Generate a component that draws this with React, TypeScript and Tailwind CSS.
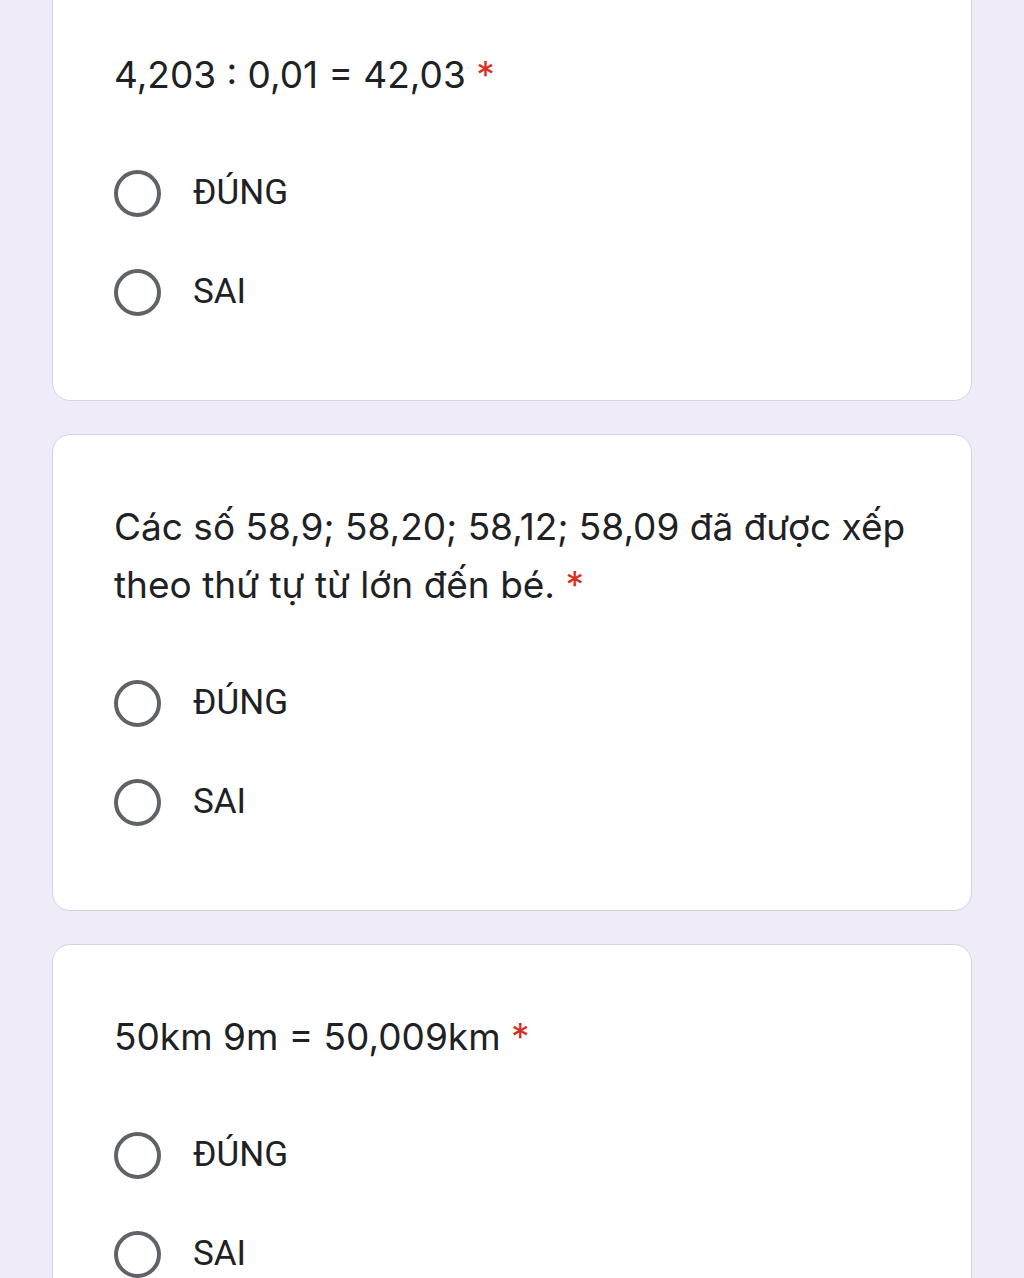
import React from "react";

function Radio({ label }: { label: string }) {
  return (
    <div className="flex h-[99px] items-center">
      <div className="h-[47px] w-[47px] shrink-0 rounded-full border-[4px] border-[#5f6368]" />
      <span
        className="ml-[32px] text-[35px] text-[#202124]"
        style={{ fontFamily: "Roboto, 'Liberation Sans', sans-serif" }}
      >
        {label}
      </span>
    </div>
  );
}

function Card({ children, first }: { children: React.ReactNode; first?: boolean }) {
  return (
    <div
      className={
        "rounded-[18px] border border-[#d6d4dc] bg-white pl-[61px] pr-[46px] pt-[63px] pb-[58px]" +
        (first ? " -mt-[18px]" : "")
      }
    >
      {children}
    </div>
  );
}

function Question({ children }: { children: React.ReactNode }) {
  return (
    <div
      className="text-[37px] leading-[58px] text-[#202124]"
      style={{ fontFamily: "Inter, 'Noto Sans', sans-serif" }}
    >
      {children} <span className="text-[#d93025]">*</span>
    </div>
  );
}

export default function App() {
  return (
    <div className="min-h-[1278px] overflow-hidden bg-[#f0ebf8] px-[52px]">
      <div className="flex flex-col gap-[33px]">
        <Card first>
          <Question>4,203 : 0,01 = 42,03</Question>
          <div className="mt-[40px]">
            <Radio label="ĐÚNG" />
            <Radio label="SAI" />
          </div>
        </Card>
        <Card>
          <Question>
            Các số 58,9; 58,20; 58,12; 58,09 đã được xếp theo thứ tự từ lớn đến bé.
          </Question>
          <div className="mt-[40px]">
            <Radio label="ĐÚNG" />
            <Radio label="SAI" />
          </div>
        </Card>
        <Card>
          <Question>50km 9m = 50,009km</Question>
          <div className="mt-[40px]">
            <Radio label="ĐÚNG" />
            <Radio label="SAI" />
          </div>
        </Card>
      </div>
    </div>
  );
}
